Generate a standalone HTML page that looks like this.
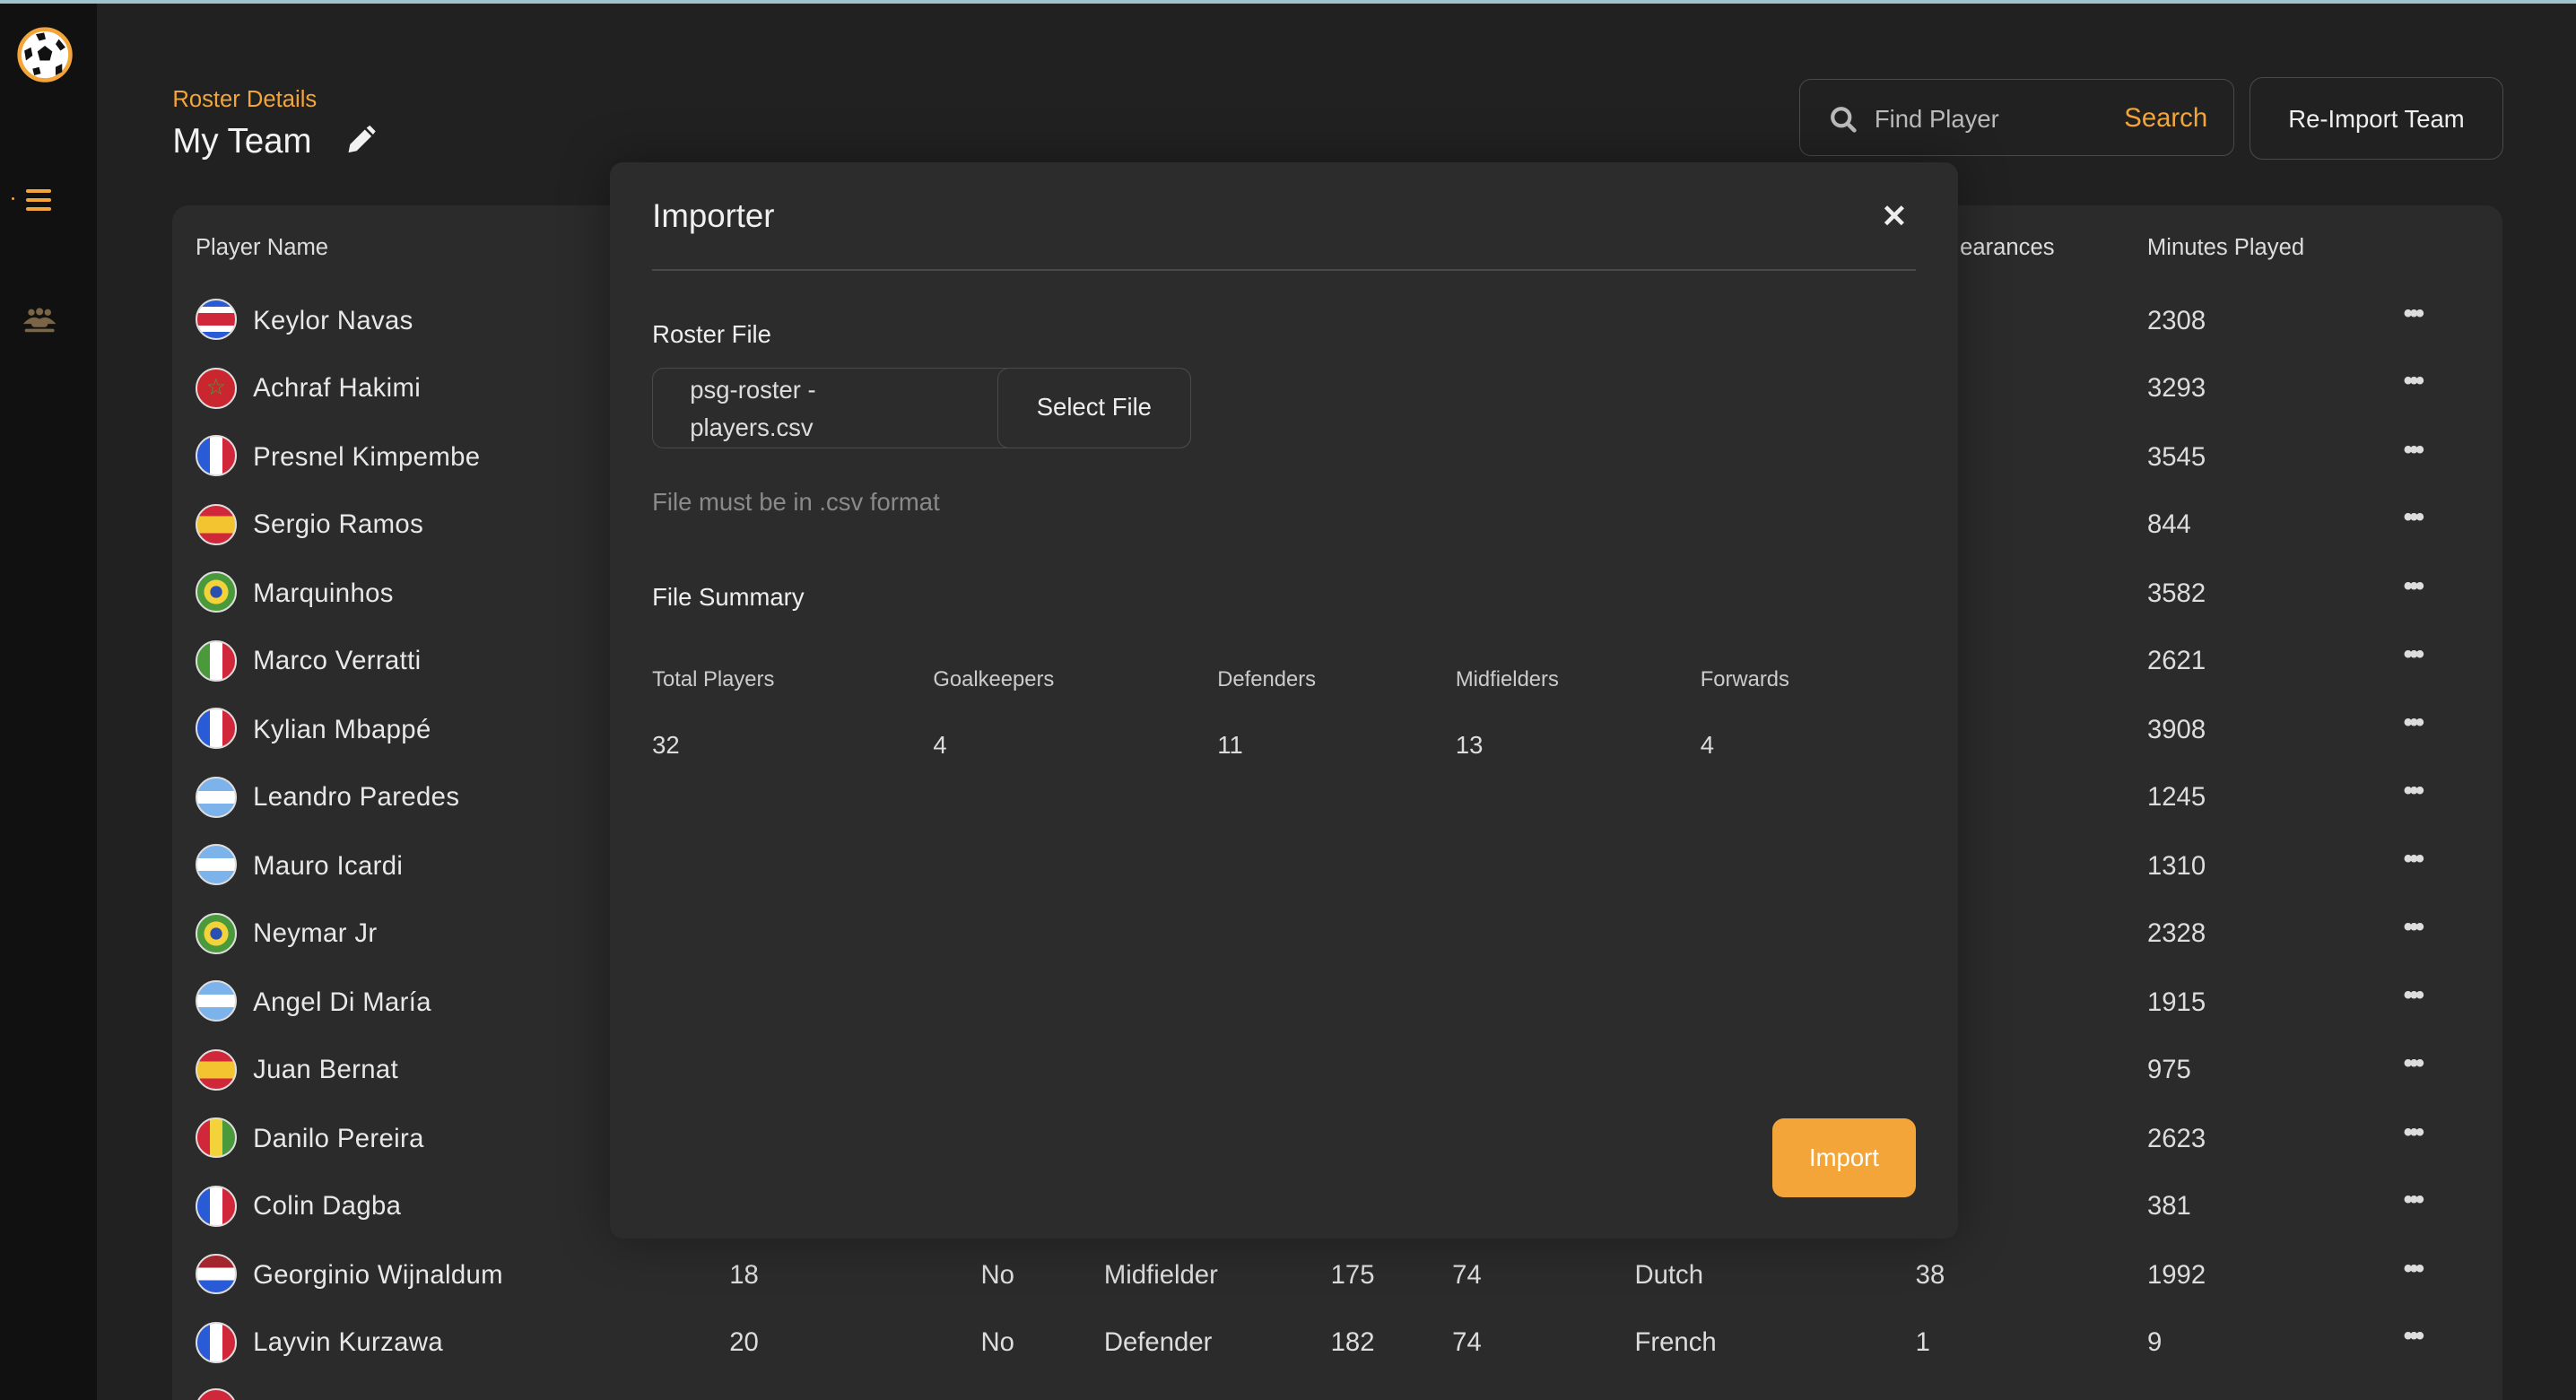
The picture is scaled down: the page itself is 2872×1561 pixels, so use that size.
<!DOCTYPE html>
<html><head><meta charset="utf-8"><style>
html,body{margin:0;padding:0;background:#212121;overflow:hidden}
body{width:1568px;height:852px;zoom:1.83163;position:relative;font-family:"Liberation Sans",sans-serif;color:#e6e6e6}
.top{position:absolute;left:0;top:0;width:1568px;height:2px;background:#9fc4cc}
.side{position:absolute;left:0;top:2px;width:59px;height:850px;background:#111}
.abs{position:absolute;white-space:nowrap}
.card{position:absolute;left:105px;top:125px;width:1418px;height:740px;background:#2b2b2b;border-radius:10px}
.flag{position:absolute;left:119px;width:25px;height:25px;border-radius:50%;box-sizing:border-box;border:1.5px solid #ddd;overflow:hidden}
.nm{position:absolute;left:154px;font-size:16px;color:#e8e8e8;margin-top:1px;letter-spacing:.2px}
.mn{position:absolute;left:1307px;font-size:16px;color:#ddd;margin-top:1px}
.dots{position:absolute;left:1463px;font-size:16px;color:#ddd;letter-spacing:-2px;font-weight:bold;margin-top:1px}
.modal{position:absolute;left:371px;top:99px;width:821px;height:655px;background:#2c2c2c;border-radius:8px;box-shadow:0 0 30px rgba(0,0,0,.35)}
.cell{position:absolute;font-size:16px;color:#ddd;margin-top:1px}
</style></head><body>
<div class="top"></div>
<div class="side">
<svg class="abs" style="left:10px;top:14px" width="35" height="35" viewBox="0 0 35 35"><circle cx="17.5" cy="17.5" r="15.5" fill="#fff" stroke="#f3a53a" stroke-width="2.5"/><polygon points="17.5,12 22,15.5 20.5,21 14.5,21 13,15.5" fill="#111"/><path d="M12 5 L17 4 L18 8 L14 9Z M26 8 L30 13 L27 15 L24 11Z M5 15 L9 13 L10 18 L6 21Z M10 26 L14 25 L15 29 L11 30Z M24 25 L28 23 L28 28 L24 30Z" fill="#111"/></svg>
<div class="abs" style="left:7px;top:118px;width:2px;height:2px;background:#f3a53a;border-radius:50%"></div>
<div class="abs" style="left:16px;top:113px;width:15px;height:2.5px;background:#f3a53a;border-radius:2px"></div>
<div class="abs" style="left:16px;top:118.5px;width:15px;height:2.5px;background:#f3a53a;border-radius:2px"></div>
<div class="abs" style="left:16px;top:124px;width:15px;height:2.5px;background:#f3a53a;border-radius:2px"></div>
<svg class="abs" style="left:13px;top:184px" width="22" height="20" viewBox="0 0 22 20"><g fill="#7a6547"><circle cx="6" cy="4" r="2"/><circle cx="11" cy="3.5" r="2.2"/><circle cx="16" cy="4" r="2"/><path d="M1 11 Q6 5 11 8 Q16 5 21 11Z"/><rect x="6" y="8" width="10" height="5" rx="2"/><rect x="2" y="14" width="18" height="2" rx="1"/></g></svg>
</div>
<div class="abs" style="left:105px;top:53px;font-size:14px;color:#f3a53a">Roster Details</div>
<div class="abs" style="left:105px;top:74px;font-size:21px;color:#f2f2f2">My Team</div>
<svg class="abs" style="left:209px;top:76px" width="20" height="20" viewBox="0 0 20 20"><path d="M3 17 L4 12 L13 3 L17 7 L8 16Z M14 2 L16 0.5 L19.5 4 L18 6Z" fill="#f2f2f2"/></svg>
<div class="abs" style="left:1095px;top:48px;width:265px;height:47px;border:1px solid #4a4a4a;border-radius:7px;box-sizing:border-box"></div>
<svg class="abs" style="left:1113px;top:64px" width="18" height="18" viewBox="0 0 18 18"><circle cx="7.5" cy="7.5" r="5.2" fill="none" stroke="#bbb" stroke-width="2.3"/><path d="M11.5 11.5 L15.5 15.5" stroke="#bbb" stroke-width="2.5" stroke-linecap="round"/></svg>
<div class="abs" style="left:1141px;top:64px;font-size:15px;color:#bbb">Find Player</div>
<div class="abs" style="left:1293px;top:63px;font-size:16px;color:#f3a53a">Search</div>
<div class="abs" style="left:1369px;top:47px;width:155px;height:50px;border:1px solid #4a4a4a;border-radius:8px;box-sizing:border-box;text-align:center;line-height:50px;font-size:15px;color:#eee">Re-Import Team</div>
<div class="card">
<div class="abs" style="left:14px;top:18px;font-size:14px;color:#ddd">Player Name</div>
<div class="abs" style="left:1088px;top:18px;font-size:14px;color:#ddd">earances</div>
<div class="abs" style="left:1202px;top:18px;font-size:14px;color:#ddd">Minutes Played</div>
</div>
<div class="flag" style="top:182px;background:linear-gradient(#2a5bd7 0 17%,#fff 17% 33%,#d0283a 33% 67%,#fff 67% 83%,#2a5bd7 83%)"></div>
<div class="flag" style="top:224px;background:#c9262f;color:#4f9a3c;font-size:14px;text-align:center;line-height:22px">☆</div>
<div class="flag" style="top:265px;background:linear-gradient(90deg,#2a5bd7 0 33%,#fff 33% 67%,#d0283a 67%)"></div>
<div class="flag" style="top:307px;background:linear-gradient(#d0283a 0 27%,#f4c430 27% 73%,#d0283a 73%)"></div>
<div class="flag" style="top:348px;background:radial-gradient(circle,#2a4fb0 0 22%,#f4d33a 23% 45%,#4a9a3c 46%)"></div>
<div class="flag" style="top:390px;background:linear-gradient(90deg,#4a9a3c 0 33%,#fff 33% 67%,#d0283a 67%)"></div>
<div class="flag" style="top:431px;background:linear-gradient(90deg,#2a5bd7 0 33%,#fff 33% 67%,#d0283a 67%)"></div>
<div class="flag" style="top:473px;background:linear-gradient(#7bb3ea 0 33%,#fff 33% 67%,#7bb3ea 67%)"></div>
<div class="flag" style="top:514px;background:linear-gradient(#7bb3ea 0 33%,#fff 33% 67%,#7bb3ea 67%)"></div>
<div class="flag" style="top:556px;background:radial-gradient(circle,#2a4fb0 0 22%,#f4d33a 23% 45%,#4a9a3c 46%)"></div>
<div class="flag" style="top:597px;background:linear-gradient(#7bb3ea 0 33%,#fff 33% 67%,#7bb3ea 67%)"></div>
<div class="flag" style="top:639px;background:linear-gradient(#d0283a 0 27%,#f4c430 27% 73%,#d0283a 73%)"></div>
<div class="flag" style="top:680px;background:linear-gradient(90deg,#d0283a 0 33%,#f4d33a 33% 67%,#4a9a3c 67%)"></div>
<div class="flag" style="top:722px;background:linear-gradient(90deg,#2a5bd7 0 33%,#fff 33% 67%,#d0283a 67%)"></div>
<div class="flag" style="top:763px;background:linear-gradient(#a3262f 0 33%,#fff 33% 67%,#2a5bd7 67%)"></div>
<div class="flag" style="top:805px;background:linear-gradient(90deg,#2a5bd7 0 33%,#fff 33% 67%,#d0283a 67%)"></div>
<div class="flag" style="top:845px;background:#d0283a"></div>
<div class="nm" style="top:185px">Keylor Navas</div>
<div class="nm" style="top:226px">Achraf Hakimi</div>
<div class="nm" style="top:268px">Presnel Kimpembe</div>
<div class="nm" style="top:309px">Sergio Ramos</div>
<div class="nm" style="top:351px">Marquinhos</div>
<div class="nm" style="top:392px">Marco Verratti</div>
<div class="nm" style="top:434px">Kylian Mbappé</div>
<div class="nm" style="top:475px">Leandro Paredes</div>
<div class="nm" style="top:517px">Mauro Icardi</div>
<div class="nm" style="top:558px">Neymar Jr</div>
<div class="nm" style="top:600px">Angel Di María</div>
<div class="nm" style="top:641px">Juan Bernat</div>
<div class="nm" style="top:683px">Danilo Pereira</div>
<div class="nm" style="top:724px">Colin Dagba</div>
<div class="nm" style="top:766px">Georginio Wijnaldum</div>
<div class="nm" style="top:807px">Layvin Kurzawa</div>
<div class="mn" style="top:185px">2308</div><div class="mn" style="top:226px">3293</div><div class="mn" style="top:268px">3545</div><div class="mn" style="top:309px">844</div><div class="mn" style="top:351px">3582</div><div class="mn" style="top:392px">2621</div><div class="mn" style="top:434px">3908</div><div class="mn" style="top:475px">1245</div><div class="mn" style="top:517px">1310</div><div class="mn" style="top:558px">2328</div><div class="mn" style="top:600px">1915</div><div class="mn" style="top:641px">975</div><div class="mn" style="top:683px">2623</div><div class="mn" style="top:724px">381</div><div class="mn" style="top:766px">1992</div><div class="mn" style="top:807px">9</div>
<div class="dots" style="top:181px">•••</div><div class="dots" style="top:222px">•••</div><div class="dots" style="top:264px">•••</div><div class="dots" style="top:305px">•••</div><div class="dots" style="top:347px">•••</div><div class="dots" style="top:388px">•••</div><div class="dots" style="top:430px">•••</div><div class="dots" style="top:471px">•••</div><div class="dots" style="top:513px">•••</div><div class="dots" style="top:554px">•••</div><div class="dots" style="top:596px">•••</div><div class="dots" style="top:637px">•••</div><div class="dots" style="top:679px">•••</div><div class="dots" style="top:720px">•••</div><div class="dots" style="top:762px">•••</div><div class="dots" style="top:803px">•••</div>
<div class="cell" style="left:444px;top:766px">18</div><div class="cell" style="left:597px;top:766px">No</div><div class="cell" style="left:672px;top:766px">Midfielder</div><div class="cell" style="left:810px;top:766px">175</div><div class="cell" style="left:884px;top:766px">74</div><div class="cell" style="left:995px;top:766px">Dutch</div><div class="cell" style="left:1166px;top:766px">38</div>
<div class="cell" style="left:444px;top:807px">20</div><div class="cell" style="left:597px;top:807px">No</div><div class="cell" style="left:672px;top:807px">Defender</div><div class="cell" style="left:810px;top:807px">182</div><div class="cell" style="left:884px;top:807px">74</div><div class="cell" style="left:995px;top:807px">French</div><div class="cell" style="left:1166px;top:807px">1</div>
<div class="modal">
<div class="abs" style="left:26px;top:21px;font-size:20px;color:#f0f0f0">Importer</div>
<div class="abs" style="left:774px;top:22px;font-size:19px;color:#eee;font-weight:bold">✕</div>
<div class="abs" style="left:26px;top:65px;width:769px;height:1px;background:#4a4a4a"></div>
<div class="abs" style="left:26px;top:96px;font-size:15px;color:#eee">Roster File</div>
<div class="abs" style="left:26px;top:125px;width:328px;height:49px;border:1px solid #4a4a4a;border-radius:7px;box-sizing:border-box"></div>
<div class="abs" style="left:236px;top:125px;width:118px;height:49px;border:1px solid #4a4a4a;border-radius:7px;box-sizing:border-box;text-align:center;line-height:47px;font-size:15px;color:#eee">Select File</div>
<div class="abs" style="left:49px;top:127px;font-size:15px;color:#ddd;line-height:23px">psg-roster -<br>players.csv</div>
<div class="abs" style="left:26px;top:198px;font-size:15px;color:#8a8a8a">File must be in .csv format</div>
<div class="abs" style="left:26px;top:256px;font-size:15px;color:#eee">File Summary</div>
<div class="abs" style="left:26px;top:307px;font-size:13px;color:#ccc">Total Players</div>
<div class="abs" style="left:197px;top:307px;font-size:13px;color:#ccc">Goalkeepers</div>
<div class="abs" style="left:370px;top:307px;font-size:13px;color:#ccc">Defenders</div>
<div class="abs" style="left:515px;top:307px;font-size:13px;color:#ccc">Midfielders</div>
<div class="abs" style="left:664px;top:307px;font-size:13px;color:#ccc">Forwards</div>
<div class="abs" style="left:26px;top:346px;font-size:15px;color:#ddd">32</div>
<div class="abs" style="left:197px;top:346px;font-size:15px;color:#ddd">4</div>
<div class="abs" style="left:370px;top:346px;font-size:15px;color:#ddd">11</div>
<div class="abs" style="left:515px;top:346px;font-size:15px;color:#ddd">13</div>
<div class="abs" style="left:664px;top:346px;font-size:15px;color:#ddd">4</div>
<div class="abs" style="left:708px;top:582px;width:87px;height:48px;background:#f3a53a;border-radius:7px;text-align:center;line-height:48px;font-size:15px;color:#fff">Import</div>
</div>
</body></html>
